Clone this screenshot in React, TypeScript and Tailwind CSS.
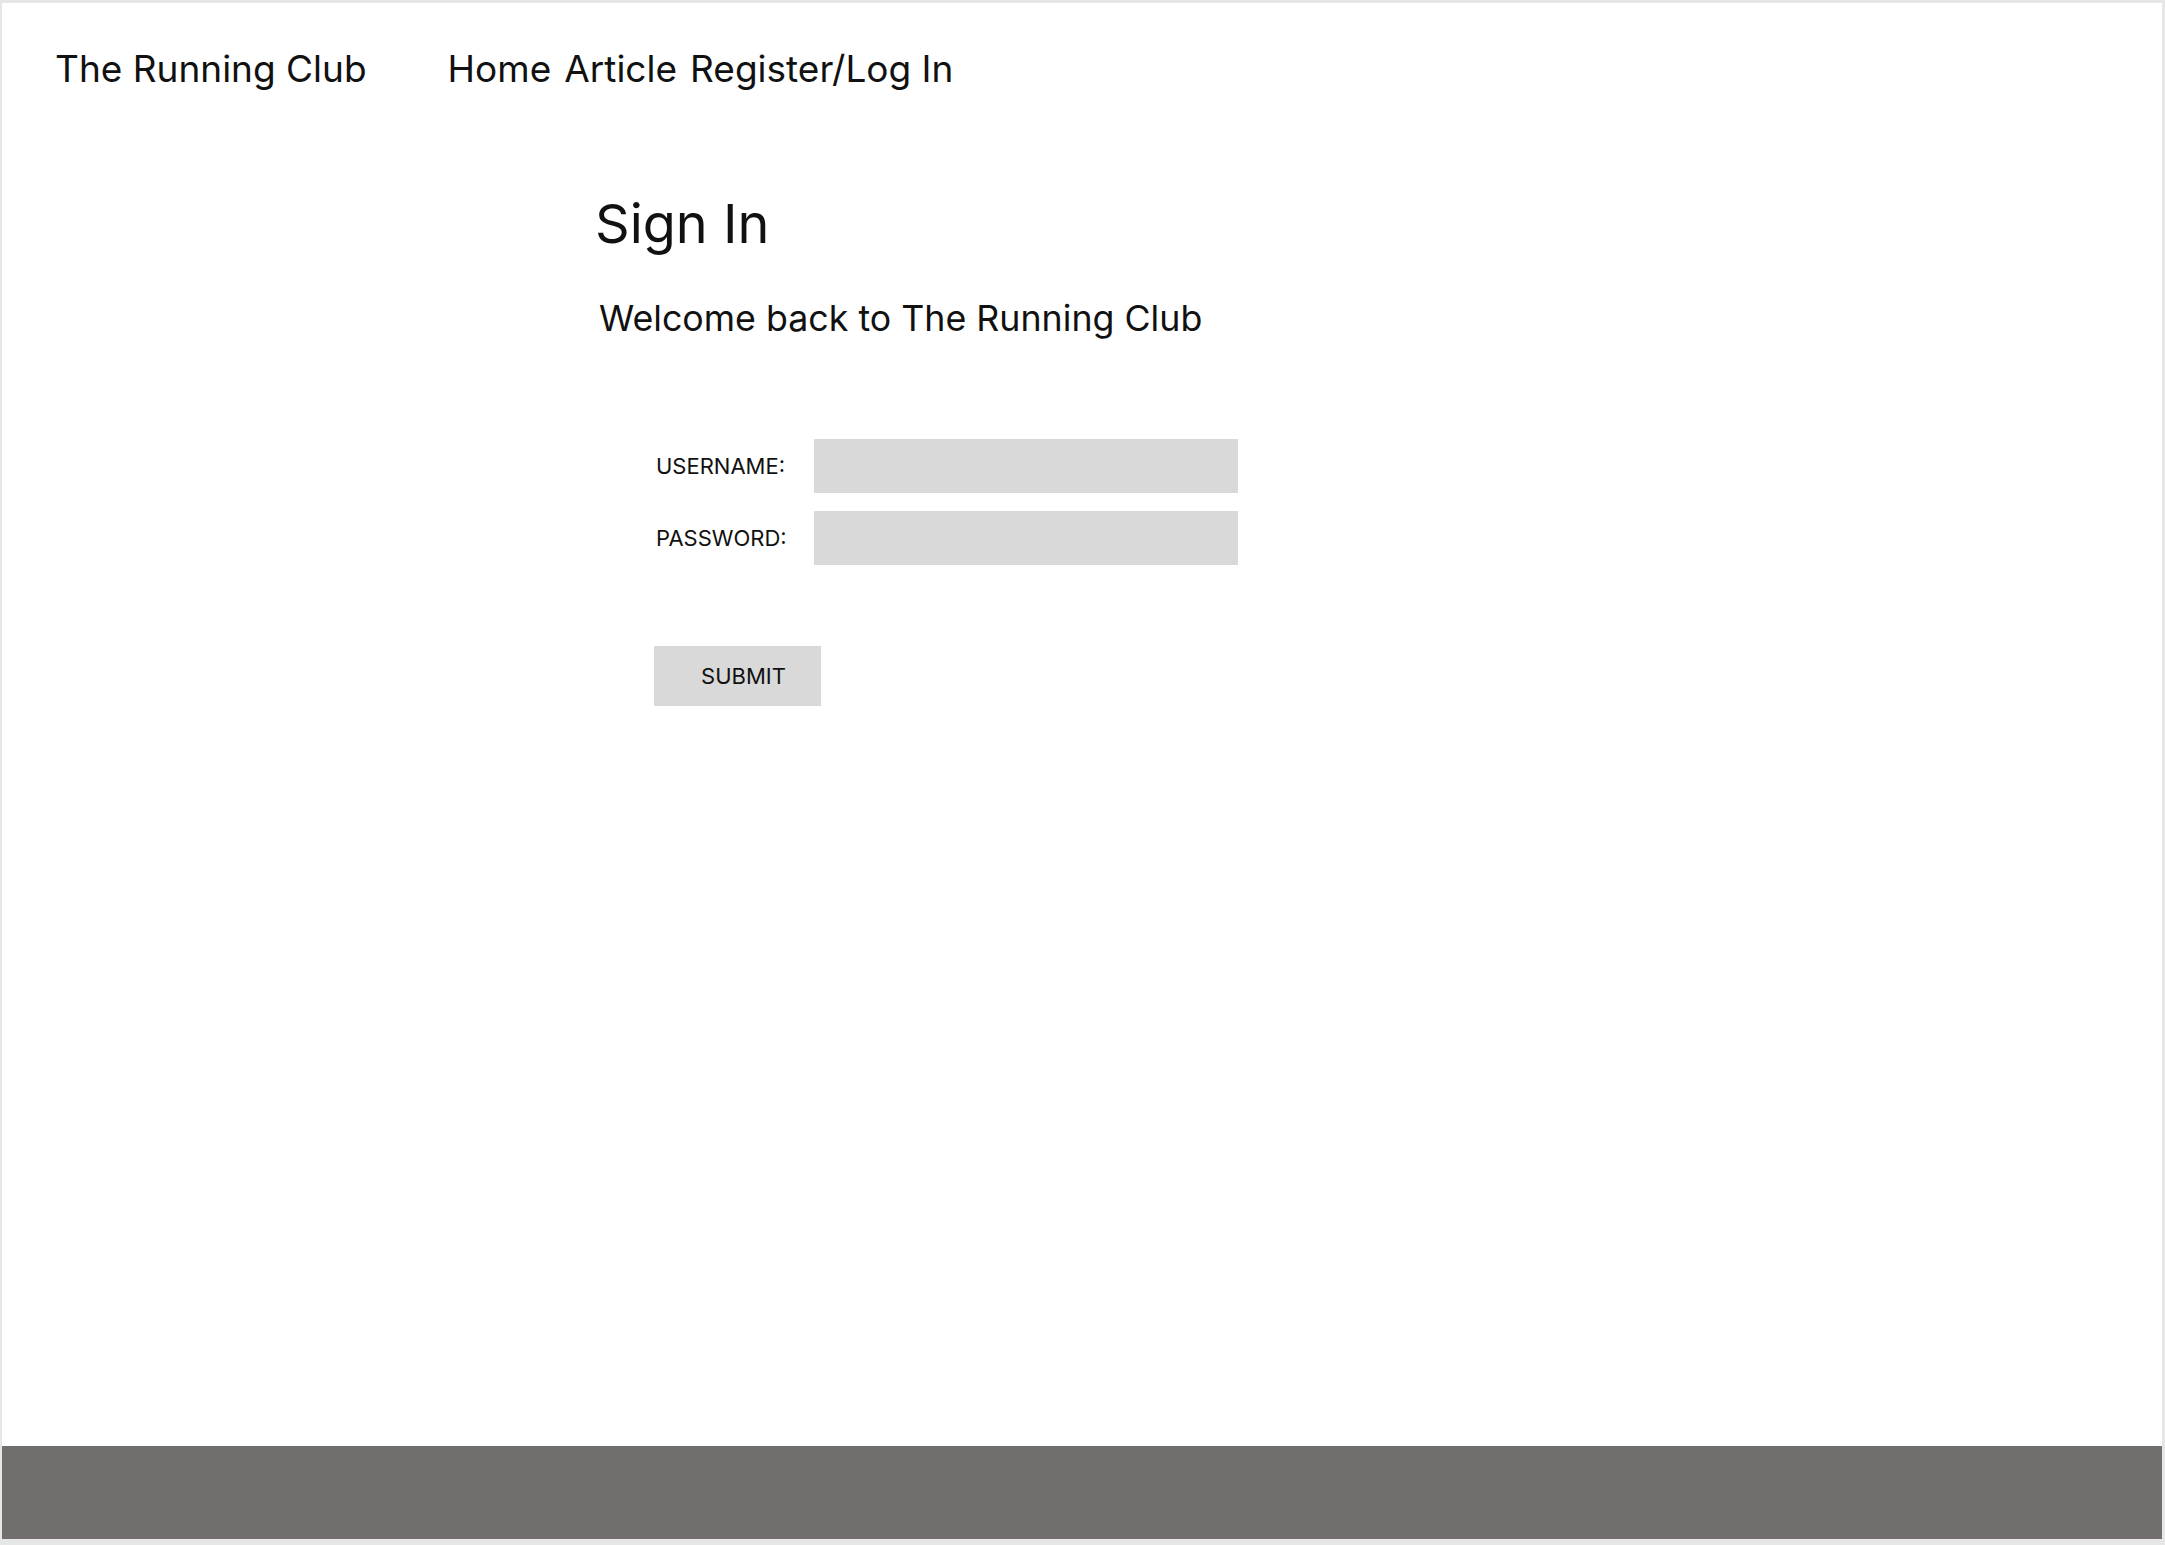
export default function App() {
  return (
    <div className="h-[1545px] w-full bg-[#e6e6e6] pt-[3px] pl-[2px] pr-[3px] pb-[6px] font-['Inter',sans-serif] text-[#111]">
      <div className="flex h-full flex-col bg-white">
        {/* Top nav */}
        <header className="flex items-center gap-[81px] pl-[53px] pt-[46px] text-[37px] leading-[40px]">
          <span>The Running Club</span>
          <nav className="flex gap-[13px]">
            <a>Home</a>
            <a>Article</a>
            <a>Register/Log In</a>
          </nav>
        </header>

        {/* Sign in */}
        <main className="flex-1 pl-[593px]">
          <h1 className="mt-[105px] text-[54px] leading-[60px]">Sign In</h1>
          <p className="mt-[44px] ml-[4px] text-[35.75px] leading-[40px]">Welcome back to The Running Club</p>

          <form className="mt-[101px] ml-[59px] flex flex-col gap-[18px]">
            <div className="flex items-center">
              <label className="w-[160px] pl-[2px] text-[22px]">USERNAME:</label>
              <input className="h-[54px] w-[424px] bg-[#d9d9d9] outline-none" />
            </div>
            <div className="flex items-center">
              <label className="w-[160px] pl-[2px] text-[22px]">PASSWORD:</label>
              <input type="password" className="h-[54px] w-[424px] bg-[#d9d9d9] outline-none" />
            </div>
            <button
              type="button"
              className="mt-[63px] h-[60px] w-[167px] bg-[#d9d9d9] pl-[12px] text-[22px]"
            >
              SUBMIT
            </button>
          </form>
        </main>

        <footer className="h-[93px] bg-[#726e6d]" />
      </div>
    </div>
  )
}
